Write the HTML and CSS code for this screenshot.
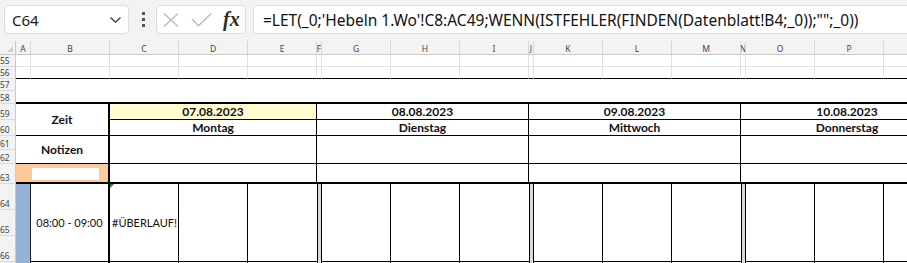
FILE: index.html
```html
<!DOCTYPE html>
<html lang="de">
<head>
<meta charset="utf-8">
<title>Excel</title>
<link rel="stylesheet" href="styles.css">
</head>
<body>
<div class="app">
  <div class="toolbar">
    <div class="namebox">
      <span class="nb-text">C64</span>
      <svg class="chev" width="11" height="6" viewBox="0 0 11 6"><polyline points="0.5,0.5 5.5,5.2 10.5,0.5" fill="none" stroke="#333" stroke-width="1.2"/></svg>
    </div>
    <div class="grip"><i></i><i></i><i></i></div>
    <div class="fbtns">
      <svg class="ic-x" width="16" height="14" viewBox="0 0 16 14"><path d="M1 0.5 L15 13.5 M15 0.5 L1 13.5" stroke="#bdbdbd" stroke-width="1.4" fill="none"/></svg>
      <svg class="ic-ok" width="21" height="14" viewBox="0 0 21 14"><polyline points="0.8,6 7.5,12.8 20.3,0.6" fill="none" stroke="#bdbdbd" stroke-width="1.4"/></svg>
      <span class="fx">fx</span>
    </div>
    <div class="formula">=LET(_0;'Hebeln 1.Wo'!C8:AC49;WENN(ISTFEHLER(FINDEN(Datenblatt!B4;_0));"";_0))</div>
  </div>

  <div class="sheet">
    <!-- column headers -->
    <div class="corner"><span class="corner-tri"></span></div>
    <div class="ch">A</div><div class="ch">B</div><div class="ch">C</div><div class="ch">D</div><div class="ch">E</div><div class="ch">F</div><div class="ch">G</div><div class="ch">H</div><div class="ch">I</div><div class="ch">J</div><div class="ch">K</div><div class="ch">L</div><div class="ch">M</div><div class="ch">N</div><div class="ch">O</div><div class="ch">P</div><div class="ch"></div>

    <!-- row 55 -->
    <div class="rh">55</div>
    <div class="gl"></div><div class="gl"></div><div class="gl"></div><div class="gl"></div><div class="gl"></div><div class="gl"></div><div class="gl"></div><div class="gl"></div><div class="gl"></div><div class="gl"></div><div class="gl"></div><div class="gl"></div><div class="gl"></div><div class="gl"></div><div class="gl"></div><div class="gl"></div><div class="gl"></div>

    <!-- row 56 -->
    <div class="rh">56</div>
    <div class="gl bk"></div><div class="gl bk"></div><div class="gl bk"></div><div class="gl bk"></div><div class="gl bk"></div><div class="gl bk"></div><div class="gl bk"></div><div class="gl bk"></div><div class="gl bk"></div><div class="gl bk"></div><div class="gl bk"></div><div class="gl bk"></div><div class="gl bk"></div><div class="gl bk"></div><div class="gl bk"></div><div class="gl bk"></div><div class="gl bk"></div>

    <!-- rows 57-58 -->
    <div class="rh">57</div>
    <div class="cell band"></div>
    <div class="rh">58</div>

    <!-- row 59 -->
    <div class="rh">59</div>
    <div class="cell s2 r2 hz vrt b">Zeit</div>
    <div class="cell s3 hz vr b yel">07.08.2023</div>
    <div class="cell s4 hz vr b">08.08.2023</div>
    <div class="cell s4 hz vr b">09.08.2023</div>
    <div class="cell s4 hz b">10.08.2023</div>

    <!-- row 60 -->
    <div class="rh">60</div>
    <div class="cell s3 hz vr b">Montag</div>
    <div class="cell s4 hz vr b">Dienstag</div>
    <div class="cell s4 hz vr b">Mittwoch</div>
    <div class="cell s4 hz b">Donnerstag</div>

    <!-- rows 61-62 -->
    <div class="rh">61</div>
    <div class="cell s2 r2 hz vrt b">Notizen</div>
    <div class="cell s3 r2 hz vr"></div>
    <div class="cell s4 r2 hz vr"></div>
    <div class="cell s4 r2 hz vr"></div>
    <div class="cell s4 r2 hz"></div>
    <div class="rh">62</div>

    <!-- row 63 -->
    <div class="rh">63</div>
    <div class="cell s2 hzt vrt org"><span class="wbox"></span></div>
    <div class="cell s3 hzt vr"></div>
    <div class="cell s4 hzt vr"></div>
    <div class="cell s4 hzt vr"></div>
    <div class="cell s4 hzt"></div>

    <!-- rows 64-66 -->
    <div class="rh">64</div>
    <div class="cell r3 blue"></div>
    <div class="cell r3 vrt hz">08:00 - 09:00</div>
    <div class="cell r3 vr hz left err">#ÜBERLAUF!<span class="tri"></span></div>
    <div class="cell r3 vr hz"></div>
    <div class="cell r3 hz"></div>
    <div class="cell r3 sep"></div>
    <div class="cell r3 vr hz"></div>
    <div class="cell r3 vr hz"></div>
    <div class="cell r3 hz"></div>
    <div class="cell r3 sep"></div>
    <div class="cell r3 vr hz"></div>
    <div class="cell r3 vr hz"></div>
    <div class="cell r3 hz"></div>
    <div class="cell r3 sep"></div>
    <div class="cell r3 vr hz"></div>
    <div class="cell r3 vr hz"></div>
    <div class="cell r3 hz"></div>
    <div class="rh">65</div>
    <div class="rh">66</div>

    <!-- row 67 (only its top edge is visible) -->
    <div class="rh"></div>
    <div class="cell blue"></div>
    <div class="cell vrt"></div>
    <div class="cell vr"></div>
    <div class="cell vr"></div>
    <div class="cell"></div>
    <div class="cell sep"></div>
    <div class="cell vr"></div>
    <div class="cell vr"></div>
    <div class="cell"></div>
    <div class="cell sep"></div>
    <div class="cell vr"></div>
    <div class="cell vr"></div>
    <div class="cell"></div>
    <div class="cell sep"></div>
    <div class="cell vr"></div>
    <div class="cell vr"></div>
    <div class="cell"></div>
  </div>
</div>
</body>
</html>
```

FILE: styles.css
```css
html, body {
  margin: 0;
  padding: 0;
  background: #ffffff;
  overflow: hidden;
}

.app {
  width: 907px;
  height: 263px;
  overflow: hidden;
  font-family: Lato, "Liberation Sans", sans-serif;
}

/* ---------- formula toolbar ---------- */
.toolbar {
  height: 41px;
  box-sizing: border-box;
  padding-top: 5px;
  background: #f3f3f3;
  display: flex;
  align-items: flex-start;
  overflow: hidden;
  font-family: "Noto Sans", "Open Sans", sans-serif;
  color: #1b1b1b;
}

.namebox {
  margin-left: 4px;
  width: 125px;
  height: 29px;
  flex: none;
  box-sizing: border-box;
  background: #fff;
  border: 1px solid #dcdcdc;
  border-radius: 4px;
  display: flex;
  align-items: center;
  justify-content: space-between;
  padding: 0 7px 0 7px;
  font-size: 15px;
}

.chev {
  display: block;
  margin-top: 1px;
}

.grip {
  margin-left: 13px;
  height: 29px;
  flex: none;
  display: flex;
  flex-direction: column;
  justify-content: center;
  gap: 3px;
}

.grip i {
  display: block;
  width: 3px;
  height: 3px;
  background: #555;
}

.fbtns {
  margin-left: 11px;
  width: 90px;
  height: 29px;
  flex: none;
  box-sizing: border-box;
  background: #fff;
  border: 1px solid #dcdcdc;
  border-radius: 4px;
  display: flex;
  align-items: center;
  padding-left: 6px;
}

.ic-x {
  display: block;
}

.ic-ok {
  display: block;
  margin-left: 12px;
}

.fx {
  margin-left: 11px;
  font-family: "Liberation Serif", "DejaVu Serif", serif;
  font-style: italic;
  font-weight: bold;
  font-size: 20px;
  color: #2b2b2b;
  line-height: 1;
  margin-top: -2px;
}

.formula {
  margin-left: 7px;
  width: 700px;
  height: 29px;
  flex: none;
  box-sizing: border-box;
  background: #fff;
  border: 1px solid #dcdcdc;
  border-radius: 4px;
  display: flex;
  align-items: center;
  padding-left: 9px;
  white-space: nowrap;
  font-size: 15.5px;
  color: #111;
}

/* ---------- sheet grid ---------- */
.sheet {
  display: grid;
  grid-template-columns: 16px 15px 79px 69px 69px 69px 5px 69px 69px 69px 5px 69px 69px 69px 5px 69px 69px 69px;
  grid-template-rows: 14px 12px 12px 12px 13px 16px 16px 14px 14px 20px 26px 26px 26px 30px;
}

.sheet > div {
  box-sizing: border-box;
  min-width: 0;
  min-height: 0;
}

.corner {
  background: #f3f3f3;
  border-right: 1px solid #c9c9c9;
  border-bottom: 1px solid #c9c9c9;
  display: flex;
  align-items: flex-end;
  justify-content: flex-end;
  padding: 0 2px 2px 0;
}

.corner-tri {
  width: 0;
  height: 0;
  border-left: 6px solid transparent;
  border-bottom: 6px solid #cfcfcf;
}

.ch {
  background: #f3f3f3;
  border-right: 1px solid #d6d6d6;
  border-bottom: 1px solid #c9c9c9;
  display: flex;
  align-items: center;
  justify-content: center;
  overflow: hidden;
  font-family: "Noto Sans", "Open Sans", sans-serif;
  font-size: 8.5px;
  color: #444;
  padding-top: 1px;
}

.rh {
  background: #f3f3f3;
  border-right: 1px solid #c9c9c9;
  border-bottom: 1px solid #dadada;
  display: flex;
  align-items: flex-end;
  justify-content: flex-start;
  overflow: hidden;
  font-family: "Noto Sans", "Open Sans", sans-serif;
  font-size: 8.5px;
  line-height: 11px;
  color: #444;
  padding-left: 0;
}

.gl {
  border-right: 1px solid #e1e1e1;
  border-bottom: 1px solid #e1e1e1;
}

.gl.bk {
  border-bottom-color: #000;
}

.cell {
  position: relative;
  display: flex;
  align-items: center;
  justify-content: center;
  overflow: hidden;
  white-space: nowrap;
  font-size: 11px;
  color: #111;
  background: #fff;
}

.band {
  grid-column: span 17;
  grid-row: span 2;
  border-bottom: 2px solid #000;
}

.s2 { grid-column: span 2; }
.s3 { grid-column: span 3; }
.s4 { grid-column: span 4; }
.r2 { grid-row: span 2; }
.r3 { grid-row: span 3; }

.hz { border-bottom: 1px solid #000; }
.hzt { border-bottom: 2px solid #000; }
.vr { border-right: 1px solid #000; }
.vrt { border-right: 2px solid #000; }

.b {
  font-weight: bold;
  font-size: 12px;
}

.yel { background: #fffcd2; }

.org {
  background: #fdca9a;
  justify-content: flex-start;
  align-items: flex-start;
  padding: 4px 0 0 16px;
}

.wbox {
  display: block;
  width: 67px;
  height: 12px;
  background: #fff;
}

.blue {
  background: #95b3d7;
  border-right: 1px solid #222;
}

.sep {
  background: #d9d9d9;
  border-left: 1px solid #000;
  border-right: 1px solid #000;
}

.left {
  justify-content: flex-start;
  padding-left: 2px;
}

.tri {
  position: absolute;
  left: 0;
  top: 0;
  width: 0;
  height: 0;
  border-top: 4px solid #1e7b3c;
  border-right: 4px solid transparent;
}
```
